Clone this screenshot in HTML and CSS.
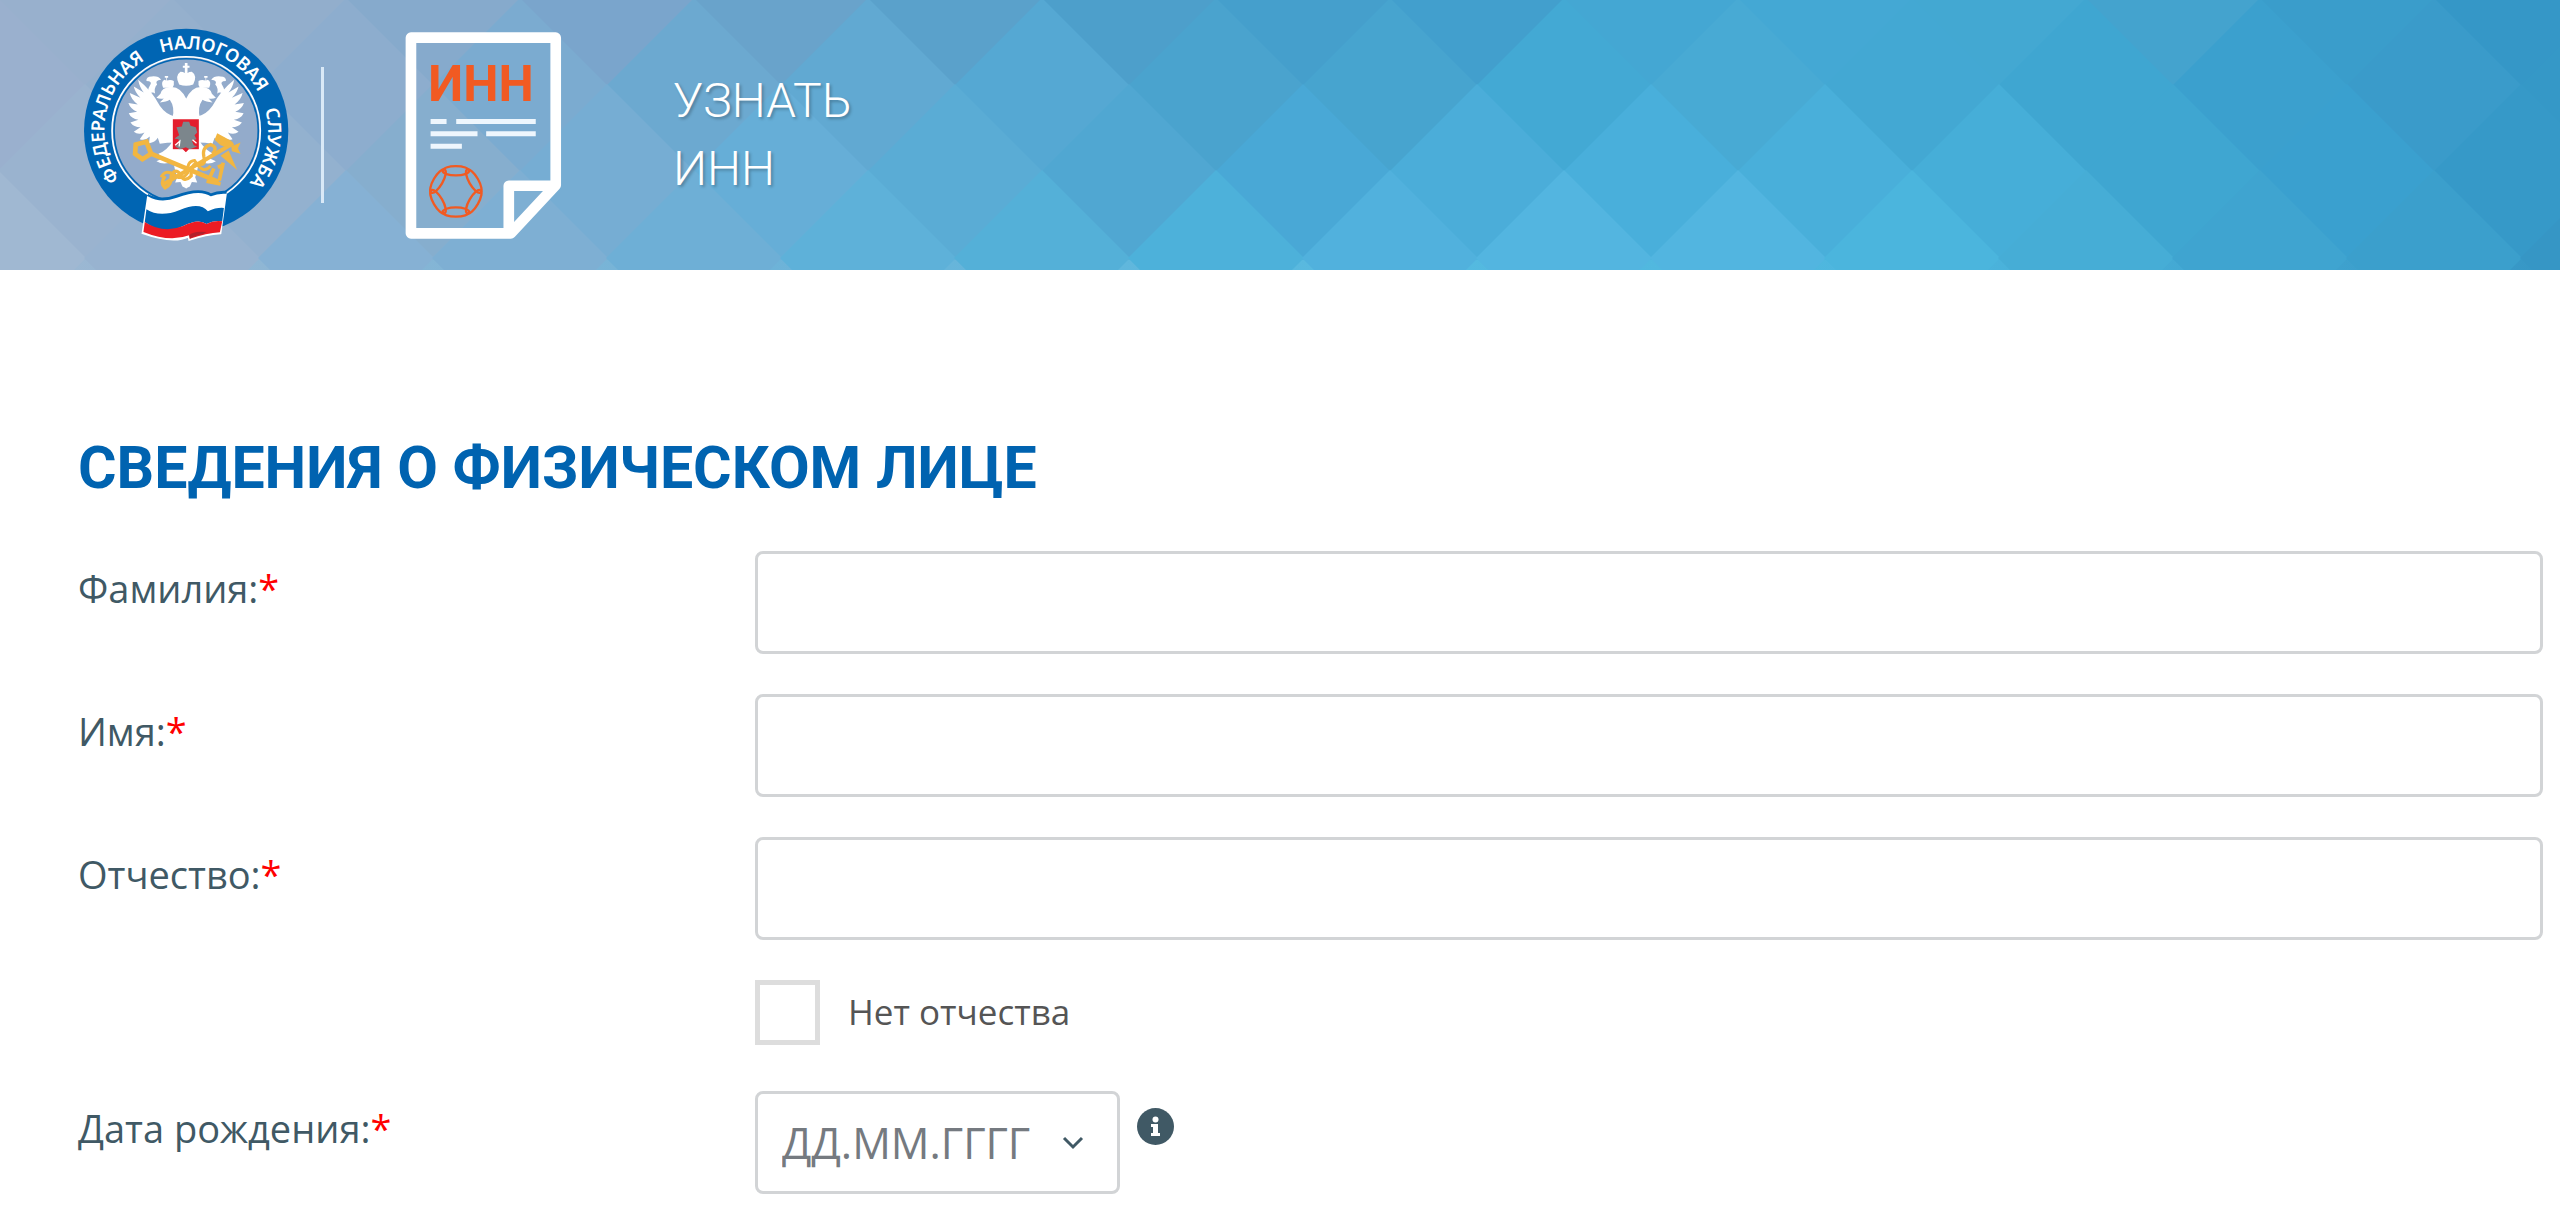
FILE: index.html
```
<!DOCTYPE html>
<html lang="ru">
<head>
    <meta charset="UTF-8">
    <meta name="viewport" content="width=device-width, initial-scale=1.0">
    <title>Узнать ИНН</title>
    <link rel="stylesheet" href="styles.css">
</head>
<body>
    <header class="header">
        <svg class="header-bg" viewBox="0 0 2560 270" preserveAspectRatio="xMidYMin slice" aria-hidden="true">
            <defs>
                <path id="cell" d="M0 -88L88 0L0 88L-88 0Z"/>
            </defs>
            <use href="#cell" x="85" y="0" fill="#98b0cd"/>
            <use href="#cell" x="259" y="0" fill="#92aecc"/>
            <use href="#cell" x="433" y="0" fill="#86aacc"/>
            <use href="#cell" x="607" y="0" fill="#7aa5cc"/>
            <use href="#cell" x="781" y="0" fill="#69a3cb"/>
            <use href="#cell" x="955" y="0" fill="#5aa1cb"/>
            <use href="#cell" x="1129" y="0" fill="#4d9fcb"/>
            <use href="#cell" x="1303" y="0" fill="#459fcc"/>
            <use href="#cell" x="1477" y="0" fill="#429fcd"/>
            <use href="#cell" x="1651" y="0" fill="#44a7d3"/>
            <use href="#cell" x="1825" y="0" fill="#44a8d4"/>
            <use href="#cell" x="1999" y="0" fill="#43a8d2"/>
            <use href="#cell" x="2173" y="0" fill="#44a3ce"/>
            <use href="#cell" x="2347" y="0" fill="#3a9dcb"/>
            <use href="#cell" x="2521" y="0" fill="#3597c7"/>

            <use href="#cell" x="-2" y="86" fill="#9ab0ce"/>
            <use href="#cell" x="172" y="86" fill="#95b0cd"/>
            <use href="#cell" x="346" y="86" fill="#8dadce"/>
            <use href="#cell" x="520" y="86" fill="#7babd0"/>
            <use href="#cell" x="694" y="86" fill="#6ca9d0"/>
            <use href="#cell" x="868" y="86" fill="#61a9d2"/>
            <use href="#cell" x="1042" y="86" fill="#55a8d3"/>
            <use href="#cell" x="1216" y="86" fill="#4aa3ce"/>
            <use href="#cell" x="1390" y="86" fill="#47a4cf"/>
            <use href="#cell" x="1564" y="86" fill="#43a9d4"/>
            <use href="#cell" x="1738" y="86" fill="#48aad4"/>
            <use href="#cell" x="1912" y="86" fill="#43a8d3"/>
            <use href="#cell" x="2086" y="86" fill="#3fa6d1"/>
            <use href="#cell" x="2260" y="86" fill="#3ba0ce"/>
            <use href="#cell" x="2434" y="86" fill="#3a9bca"/>
            <use href="#cell" x="2608" y="86" fill="#3598c7"/>

            <use href="#cell" x="85" y="172" fill="#9ab3cf"/>
            <use href="#cell" x="259" y="172" fill="#93b1cf"/>
            <use href="#cell" x="433" y="172" fill="#86aece"/>
            <use href="#cell" x="607" y="172" fill="#76add3"/>
            <use href="#cell" x="781" y="172" fill="#66aed7"/>
            <use href="#cell" x="955" y="172" fill="#5aacd5"/>
            <use href="#cell" x="1129" y="172" fill="#50a7d2"/>
            <use href="#cell" x="1303" y="172" fill="#49a8d6"/>
            <use href="#cell" x="1477" y="172" fill="#4badd9"/>
            <use href="#cell" x="1651" y="172" fill="#49afdb"/>
            <use href="#cell" x="1825" y="172" fill="#49afda"/>
            <use href="#cell" x="1999" y="172" fill="#46aed8"/>
            <use href="#cell" x="2173" y="172" fill="#3fa6d1"/>
            <use href="#cell" x="2347" y="172" fill="#3aa0cf"/>
            <use href="#cell" x="2521" y="172" fill="#3699c8"/>

            <use href="#cell" x="-2" y="258" fill="#a0b8d2"/>
            <use href="#cell" x="172" y="258" fill="#98b3d0"/>
            <use href="#cell" x="346" y="258" fill="#86b1d4"/>
            <use href="#cell" x="520" y="258" fill="#7eafd3"/>
            <use href="#cell" x="694" y="258" fill="#6eafd6"/>
            <use href="#cell" x="868" y="258" fill="#5eb1d9"/>
            <use href="#cell" x="1042" y="258" fill="#54b0d8"/>
            <use href="#cell" x="1216" y="258" fill="#4db1da"/>
            <use href="#cell" x="1390" y="258" fill="#51b1dd"/>
            <use href="#cell" x="1564" y="258" fill="#53b5e0"/>
            <use href="#cell" x="1738" y="258" fill="#52b5e0"/>
            <use href="#cell" x="1912" y="258" fill="#4bb5dd"/>
            <use href="#cell" x="2086" y="258" fill="#46add6"/>
            <use href="#cell" x="2260" y="258" fill="#3fa4d0"/>
            <use href="#cell" x="2434" y="258" fill="#3b9fcc"/>
            <use href="#cell" x="2608" y="258" fill="#3696c5"/>
        </svg>

        <a href="#" class="emblem" aria-label="Федеральная налоговая служба">
            <svg viewBox="70 50 620 650">
                <defs>
                    <path id="ringPath" d="M181 505A245 245 0 1 1 561 525"/>
                    <g id="halfEagle">
                        <!-- wing -->
                        <path d="M235 208Q240 232 252 246L222 228Q226 246 242 262L210 248Q214 268 234 282L206 278Q212 296 232 304L207 308Q214 324 236 328L212 336Q222 350 242 350L222 364Q236 374 254 366L240 386Q256 392 270 378L268 398Q286 396 294 382L300 400Q322 396 345 396V318Q318 312 300 286Q276 240 235 208Z"/>
                        <!-- head and neck -->
                        <path d="M381 268Q362 226 330 230Q306 232 302 250L290 262Q300 266 312 264L300 276Q320 274 330 268Q346 290 338 324H381Z"/>
                        <!-- small crown -->
                        <path d="M310 232Q302 214 314 208L319 210V202H315V197H325V202H321V210Q334 206 342 212Q344 224 338 232Z"/>
                        <!-- ribbon -->
                        <path d="M304 208Q296 196 276 198Q258 198 260 212Q280 212 270 226Q262 238 268 250Q280 242 286 250Q282 232 292 222Q284 210 304 208Z"/>
                        <!-- leg and tail -->
                        <path d="M340 390Q322 420 296 430L308 444L290 452Q312 466 340 452L346 480L352 500L346 516L362 514L368 528L380 534V390Z"/>
                    </g>
                </defs>
                <circle cx="379" cy="361" r="306" fill="#0065b3"/>
                <circle cx="379" cy="361" r="222" fill="#93abcb" stroke="#fff" stroke-width="5"/>
                <circle cx="379" cy="361" r="216" fill="none" stroke="#0065b3" stroke-width="5"/>
                <g class="ring-text">
                    <text><textPath href="#ringPath" startOffset="0">ФЕДЕРАЛЬНАЯ</textPath></text>
                    <text><textPath href="#ringPath" startOffset="462">НАЛОГОВАЯ</textPath></text>
                    <text><textPath href="#ringPath" startOffset="858">СЛУЖБА</textPath></text>
                </g>
                <g fill="#fff">
                    <use href="#halfEagle"/>
                    <use href="#halfEagle" transform="matrix(-1 0 0 1 758 0)"/>
                    <path d="M358 222Q344 196 362 184Q370 184 375 188V172H369V166H375V158H383V166H389V172H383V188Q388 184 396 184Q414 196 400 222Q379 230 358 222Z"/>
                </g>
                <path d="M337 324H419V418H388L378 428L368 418H337Z" fill="#e31e2d" stroke="#fff" stroke-width="4"/>
                <path d="M350 350L366 348L370 334L388 334L392 346L408 350L412 366L404 374L410 386L396 390L402 404L412 408L390 416L378 410L360 416L346 408L358 398L356 386L344 384L358 374Z" fill="#7c868c"/>
                <path d="M346 404L360 392L358 408M398 388L410 398" fill="none" stroke="#fff" stroke-width="4"/>
                <!-- crossed key and caduceus -->
                <g fill="none" stroke="#f2b641" stroke-width="14">
                    <path d="M228 402L260 394L274 430L248 446L226 430Z"/>
                    <path d="M270 428L476 514"/>
                    <path d="M450 500L462 474M478 510L490 456M474 470L492 462M440 512L482 520" stroke-width="11"/>
                    <path d="M306 524L520 398" stroke-width="12"/>
                    <path d="M316 496Q300 518 316 532Q336 524 334 496Q346 470 362 492Q372 518 394 496Q392 464 410 458Q440 470 432 438Q426 410 452 402Q476 410 458 430" stroke-width="10"/>
                    <path d="M304 500Q316 476 340 490Q364 514 384 486Q380 452 404 450Q430 494 452 466" stroke-width="9"/>
                </g>
                <path d="M472 368L516 392L504 412L482 404L464 388ZM514 408L542 396L534 414L542 430L516 422ZM506 420L532 478L482 436Z" fill="#f2b641"/>
                <!-- flag -->
                <path d="M262 556Q300 578 350 560Q420 534 452 556Q476 546 500 548" fill="none" stroke="#0065b3" stroke-width="14"/>
                <path d="M264 560Q302 582 352 564Q420 538 452 560Q476 550 498 552L482 668Q440 670 388 688L386 678Q340 700 248 668Z" fill="#fff" stroke="#fff" stroke-width="5"/>
                <path d="M260 596Q300 622 360 598Q420 572 444 602Q470 590 492 592L487 632Q462 628 440 640Q416 622 370 646Q310 676 255 634Z" fill="#0065b3"/>
                <path d="M255 634Q310 670 370 646Q416 622 440 640Q462 628 487 632L480 665Q440 668 390 684L388 674Q330 696 251 664Z" fill="#ec1c24"/>
                <path d="M388 674Q400 660 440 664L430 670Q400 676 390 684Z" fill="#b3202b"/>
            </svg>
        </a>
        <span class="divider"></span>
        <svg class="doc-icon" viewBox="78 62 470 622" aria-hidden="true">
            <g fill="none" stroke="#fff" stroke-width="32" stroke-linejoin="round">
                <path d="M95 79H530V522L395 667H95Z"/>
                <path d="M530 524H389V660"/>
            </g>
            <text x="147" y="270" class="doc-text">ИНН</text>
            <path d="M154 331H202M231 331H470M154 368H295M321 368H470M154 405H248" stroke="#eef6fd" stroke-width="15"/>
            <!-- rosette of six petals -->
            <g fill="none" stroke="#f15a22" stroke-width="7">
                <ellipse cx="230" cy="479" rx="40" ry="14"/>
                <ellipse cx="230" cy="479" rx="40" ry="14" transform="rotate(60 230 541)"/>
                <ellipse cx="230" cy="479" rx="40" ry="14" transform="rotate(120 230 541)"/>
                <ellipse cx="230" cy="479" rx="40" ry="14" transform="rotate(180 230 541)"/>
                <ellipse cx="230" cy="479" rx="40" ry="14" transform="rotate(240 230 541)"/>
                <ellipse cx="230" cy="479" rx="40" ry="14" transform="rotate(300 230 541)"/>
            </g>
        </svg>
        <div class="title">Узнать<br>ИНН</div>
    </header>

    <main class="content">
        <h1>Сведения о физическом лице</h1>
        <form>
            <div class="row">
                <label for="fam">Фамилия:<span class="req">*</span></label>
                <input type="text" id="fam" class="field">
                <svg class="info" viewBox="0 0 37 37"><use href="#infoIcon"/></svg>
            </div>
            <div class="row">
                <label for="nam">Имя:<span class="req">*</span></label>
                <input type="text" id="nam" class="field">
                <svg class="info" viewBox="0 0 37 37"><use href="#infoIcon"/></svg>
            </div>
            <div class="row">
                <label for="otch">Отчество:<span class="req">*</span></label>
                <input type="text" id="otch" class="field">
                <svg class="info" viewBox="0 0 37 37"><use href="#infoIcon"/></svg>
            </div>
            <div class="check-row">
                <input type="checkbox" id="noOtch">
                <label for="noOtch">Нет отчества</label>
            </div>
            <div class="row">
                <label for="bdate">Дата рождения:<span class="req">*</span></label>
                <div class="date-cell">
                    <div class="date">
                        <input type="text" id="bdate" placeholder="ДД.ММ.ГГГГ">
                        <button type="button" aria-label="Открыть календарь">
                            <svg viewBox="0 0 22 14"><path d="M2 2L11 11L20 2" fill="none" stroke="#405965" stroke-width="3"/></svg>
                        </button>
                    </div>
                    <svg class="info" viewBox="0 0 37 37">
                        <g id="infoIcon">
                            <circle cx="18.5" cy="18.5" r="18.5" fill="#405965"/>
                            <path d="M14 16H21V25H23V28H14V25H16V19H14Z" fill="#fff"/>
                            <circle cx="18.5" cy="11.5" r="3" fill="#fff"/>
                        </g>
                    </svg>
                </div>
            </div>
        </form>
    </main>
</body>
</html>
```
FILE: styles.css
```
* {
    box-sizing: border-box;
}
body {
    margin: 0;
    background: #fff;
    color: #405965;
    font-family: "Open Sans", "Noto Sans", sans-serif;
    font-size: 38px;
    overflow-x: hidden;
}
.header {
    position: relative;
    display: flex;
    align-items: center;
    height: 270px;
    padding-left: 83px;
    background: linear-gradient(to right, #a0b8d2, #6eb3d8 30%, #55bae0 55%, #4db6de 75%, #3696c5);
    overflow: hidden;
}
.header-bg {
    position: absolute;
    top: 0;
    left: 0;
    width: 100%;
    height: 100%;
}
.emblem,
.divider,
.doc-icon,
.title {
    position: relative;
    flex: none;
}
.emblem svg {
    display: block;
    width: 207px;
    height: 217px;
}
.ring-text {
    font-family: "Noto Sans", sans-serif;
    font-size: 55px;
    font-weight: 600;
    fill: #fff;
}
.divider {
    width: 3px;
    height: 136px;
    margin-left: 31px;
    background: #d9e9f7;
}
.doc-icon {
    width: 157px;
    height: 207px;
    margin-left: 81px;
}
.doc-text {
    font-family: Roboto, sans-serif;
    font-size: 150px;
    font-weight: bold;
    fill: #f15a22;
}
.title {
    margin-left: 111px;
    color: #fff;
    font-family: Roboto, sans-serif;
    font-size: 48px;
    font-weight: 300;
    line-height: 68px;
    text-transform: uppercase;
    text-shadow: 2px 2px 3px rgba(0, 0, 0, 0.25);
}
.content {
    padding: 160px 18px 0 78px;
}
h1 {
    margin: 0 0 45px;
    color: #0063b0;
    font-family: Roboto, sans-serif;
    font-size: 59px;
    font-weight: bold;
    line-height: 76px;
    text-transform: uppercase;
}
.row {
    display: grid;
    grid-template-columns: 660px 1fr 37px;
    column-gap: 17px;
    align-items: start;
    margin: 0 -55px 40px 0;
}
.row label {
    padding-top: 10px;
    line-height: 54px;
}
.req {
    color: #f00;
}
.field,
.date {
    height: 103px;
    border: 3px solid #d2d4d6;
    border-radius: 8px;
    background: #fff;
}
.field {
    width: 100%;
    padding: 0 24px;
    color: #405965;
    font: inherit;
}
.info {
    display: block;
    flex: none;
    width: 37px;
    height: 37px;
    margin-top: 17px;
}
.check-row {
    display: flex;
    align-items: center;
    gap: 28px;
    margin: 0 0 46px 677px;
    color: #555;
    font-size: 35px;
}
.check-row label {
    padding-bottom: 3px;
}
.check-row input {
    appearance: none;
    width: 65px;
    height: 65px;
    margin: 0;
    border: 5px solid #ddd;
    background: #fff;
}
.check-row input:checked {
    background: #0063b0;
}
.date-cell {
    display: flex;
    gap: 17px;
}
.date {
    display: flex;
    align-items: center;
    width: 365px;
    padding: 0 24px;
}
.date input {
    width: 270px;
    padding: 0;
    border: none;
    outline: none;
    color: #405965;
    font: inherit;
    font-size: 43px;
}
.date input::placeholder {
    color: #757a80;
    opacity: 1;
}
.date button {
    width: 46px;
    padding: 0;
    border: none;
    background: none;
    cursor: pointer;
}
.date button svg {
    display: block;
    width: 22px;
    height: 14px;
    margin: 0 auto;
}
```
